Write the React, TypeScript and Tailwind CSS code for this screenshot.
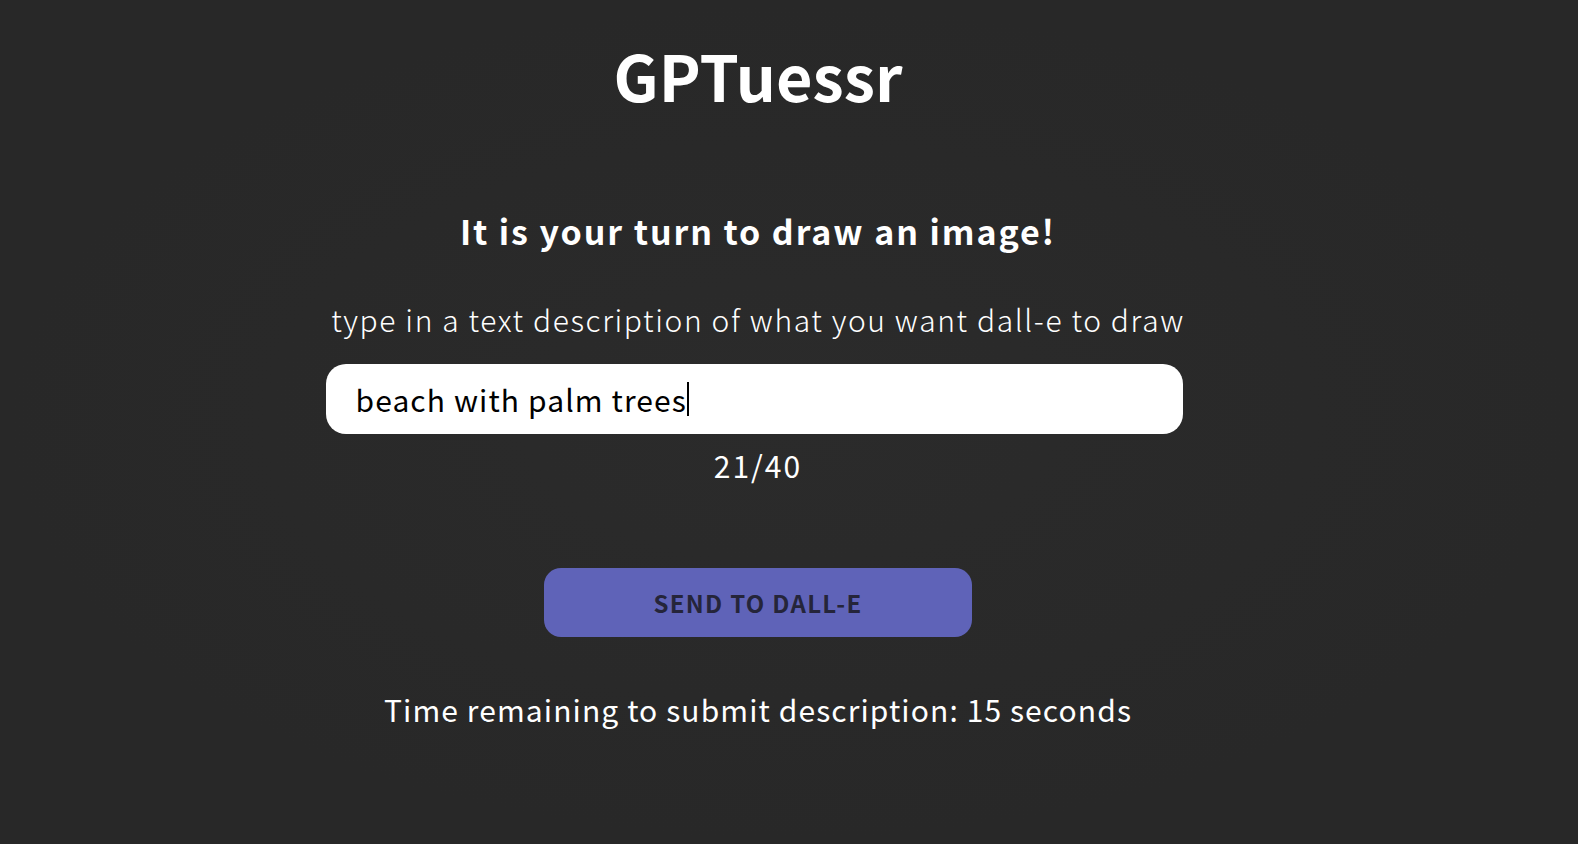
export default function App() {
  return (
    <div
      className="min-h-screen w-full flex flex-col items-center pr-[62px] text-white bg-[radial-gradient(ellipse_at_center,#2b2b2b_0%,#282828_70%)]"
      style={{ fontFamily: '"Noto Sans CJK JP", "Noto Sans", sans-serif' }}
    >
      {/* TITLE */}
      <h1 className="mt-[31px] text-[63px] leading-[88px] font-bold">GPTuessr</h1>

      {/* PROMPT */}
      <h2 className="mt-[88px] text-[34px] leading-[48px] font-bold tracking-[1.9px]">
        It is your turn to draw an image!
      </h2>
      <p className="mt-[44px] text-[30px] leading-[40px] font-light tracking-[1.6px]">
        type in a text description of what you want dall-e to draw
      </p>

      <div className="mt-[25px] ml-[-8px] w-[857px] h-[70px] bg-white rounded-[20px] flex items-center px-[30px]">
        <span className="text-black text-[30px] tracking-[1.1px]">beach with palm trees</span>
        <span className="w-[2px] h-[34px] bg-black"></span>
      </div>
      <p className="mt-[11px] text-[30px] leading-[40px] tracking-[2px]">21/40</p>

      <button className="mt-[83px] w-[428px] h-[69px] rounded-[17px] bg-[#5f63b8] text-[#25253a] text-[24px] font-bold tracking-[1.3px]">
        SEND TO DALL-E
      </button>

      <p className="mt-[52px] text-[30px] leading-[40px] tracking-[1.1px]">
        Time remaining to submit description: 15 seconds
      </p>
    </div>
  );
}
